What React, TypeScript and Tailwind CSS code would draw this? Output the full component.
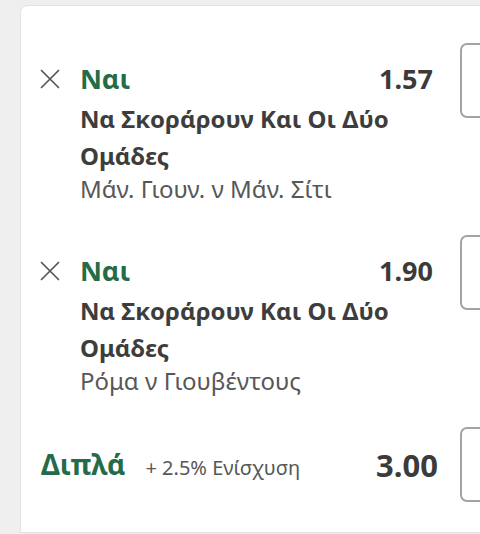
const font = { fontFamily: '"Noto Sans", "Open Sans", sans-serif' };

interface Selection {
  pick: string;
  market: string;
  event: string;
  odds: string;
}

const selections: Selection[] = [
  { pick: 'Ναι', market: 'Να Σκοράρουν Και Οι Δύο Ομάδες', event: 'Μάν. Γιουν. ν Μάν. Σίτι', odds: '1.57' },
  { pick: 'Ναι', market: 'Να Σκοράρουν Και Οι Δύο Ομάδες', event: 'Ρόμα ν Γιουβέντους', odds: '1.90' },
];

function StakeBox() {
  return <div className="h-[75px] w-[60px] shrink-0 rounded-[7px] border-2 border-[#a3a3a3] bg-white" />;
}

function RemoveIcon() {
  return (
    <svg width="20" height="20" viewBox="0 0 20 20" fill="none" stroke="#555555" strokeWidth="1.7" strokeLinecap="round">
      <path d="M1.5 1.5 L18.5 18.5 M18.5 1.5 L1.5 18.5" />
    </svg>
  );
}

function SelectionRow({ s }: { s: Selection }) {
  return (
    <div className="flex items-start">
      <div className="flex h-[32px] w-[59px] shrink-0 items-center pl-[19px] mt-[20px]">
        <RemoveIcon />
      </div>
      <div className="flex-1 pt-[20px]">
        <div className="flex items-center justify-between">
          <span className="text-[27px] font-bold leading-[32px] text-[#246b48]">{s.pick}</span>
          <span className="pr-[27px] text-[27px] font-bold leading-[32px] text-[#3b3b3b]">{s.odds}</span>
        </div>
        <div className="mt-[5px] pr-[20px] text-[24px] font-bold leading-[37px] text-[#3d3d3d]">{s.market}</div>
        <div className="text-[24px] leading-[29px] text-[#575757]">{s.event}</div>
      </div>
      <StakeBox />
    </div>
  );
}

export default function App() {
  return (
    <div className="h-[534px] w-[480px] overflow-hidden bg-[#efefef]" style={font}>
      <div className="ml-[20px] mt-[5px] flex h-[528px] w-[501px] flex-col rounded-tl-[8px] border border-[#e3e3e3] bg-white pt-[37px]">
        <SelectionRow s={selections[0]} />
        <div className="mt-[32px]">
          <SelectionRow s={selections[1]} />
        </div>
        <div className="mt-[32px] flex items-center">
          <div className="flex flex-1 items-baseline pl-[20px]">
            <span className="text-[28px] font-bold leading-[36px] text-[#246b48]">Διπλά</span>
            <span className="ml-[20px] text-[20px] text-[#575757]">+ 2.5% Ενίσχυση</span>
          </div>
          <span className="pr-[22px] text-[31px] font-bold leading-[36px] text-[#3b3b3b]">3.00</span>
          <StakeBox />
        </div>
      </div>
    </div>
  );
}
